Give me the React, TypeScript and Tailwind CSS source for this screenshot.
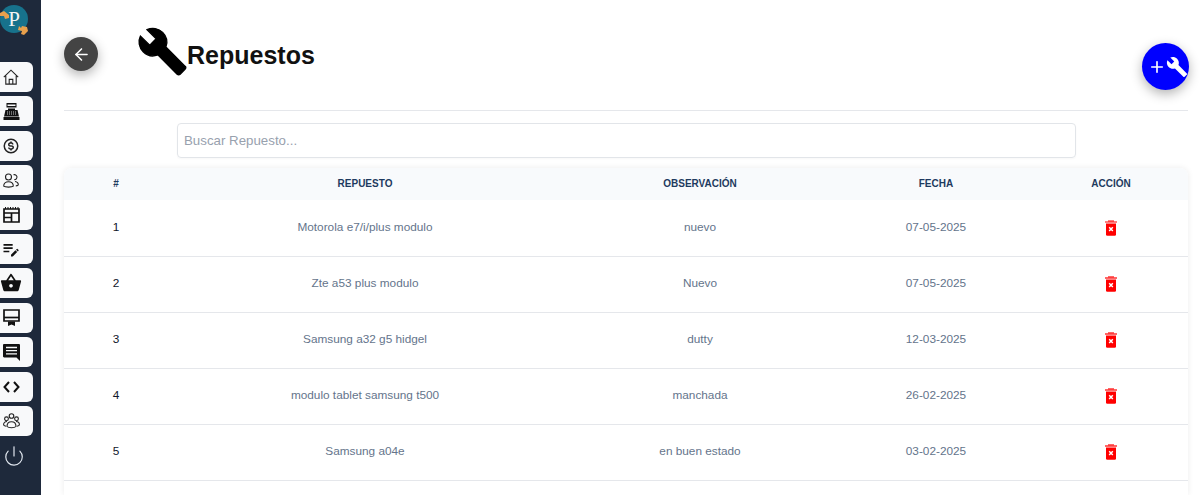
import { ArrowLeft, Plus, Power } from "lucide-react";
import { BiDollarCircle } from "react-icons/bi";
import { MdBuild, MdOutlineEditNote, MdShoppingBasket } from "react-icons/md";

const rows = [
  { id: 1, name: "Motorola e7/i/plus modulo", note: "nuevo", date: "07-05-2025" },
  { id: 2, name: "Zte a53 plus modulo", note: "Nuevo", date: "07-05-2025" },
  { id: 3, name: "Samsung a32 g5 hidgel", note: "dutty", date: "12-03-2025" },
  { id: 4, name: "modulo tablet samsung t500", note: "manchada", date: "26-02-2025" },
  { id: 5, name: "Samsung a04e", note: "en buen estado", date: "03-02-2025" },
];

function Wrench() {
  return (
    <svg width="51" height="51" viewBox="0 0 24 24" fill="#000" stroke="#000" strokeWidth="0.6" className="ml-[39px] mt-[26px] shrink-0">
      <path d="M22.7 19l-9.1-9.1c.9-2.3.4-5-1.500-6.900-2-2-5-2.400-7.400-1.300L9 6 6 9 1.600 4.700C.4 7.100.9 10.100 2.900 12.100c1.900 1.900 4.600 2.400 6.900 1.500l9.100 9.100c.4.4 1 .4 1.400 0l2.300-2.300c.5-.4.5-1.100.1-1.400z" />
    </svg>
  );
}

function House() {
  return (
    <svg width="16" height="16" viewBox="0 0 16 16" fill="none" stroke="#222" strokeWidth="1.1">
      <path d="M.8 8.200L8 1.200l7.200 7M2.800 6.800v8.300h10.400V6.800M6.200 15v-4.600h3.600V15" />
    </svg>
  );
}

function Register() {
  return (
    <svg width="17" height="17" viewBox="0 0 17 17" fill="#111">
      <path d="M3.500 0h10v4.500h-10zM5 5.500h7V7H5z" />
      <path d="M2.500 7h12l1.500 6.500H1z" />
      <path d="M.5 14h16v3H.5z" />
      <path d="M4 9h9M4 11h9" stroke="#f8f9fa" strokeWidth=".8" strokeDasharray="1 1" />
      <path d="M4.500 1.500h8v1.500h-8z" fill="#f8f9fa" />
    </svg>
  );
}

function Users() {
  return (
    <svg width="16" height="15" viewBox="0 0 16 15" fill="none" stroke="#222" strokeWidth="1.100">
      <circle cx="5.500" cy="4" r="3" />
      <path d="M.7 13.200c0-3 2-4.400 4.800-4.400s4.800 1.400 4.800 4.400c-1.300 1.200-8.300 1.200-9.600 0z" />
      <path d="M10.500 1.800a2.500 2.500 0 1 1 .8 4.800M12 8.500c2 .3 3.300 1.400 3.300 3.300 0 .5-1 1-2.500 1.100" />
    </svg>
  );
}

function CalendarGrid() {
  return (
    <svg width="17" height="16" viewBox="0 0 17 16" fill="none" stroke="#111" strokeWidth="1.700">
      <path d="M1 2h15v13H1z" />
      <path d="M1 6h15M1 10.500h7.500M8.500 6v9" />
      <path d="M2.500 0v2M5 0v2M7.500 0v2M10 0v2M12.500 0v2M15 0v2" strokeWidth="1" />
    </svg>
  );
}

function Kiosk() {
  return (
    <svg width="17" height="18" viewBox="0 0 17 18" fill="none" stroke="#111" strokeWidth="1.700">
      <path d="M1 1h15v11H1z" />
      <path d="M1 8.500h15" />
      <path d="M5 12.500h7v4.500l-3.500-1.500L5 17z" fill="#111" stroke="none" />
    </svg>
  );
}

function Chat() {
  return (
    <svg width="17" height="17" viewBox="0 0 17 17">
      <path d="M1.200 0h14.600c.7 0 1.200.5 1.200 1.200V17l-3.500-3.500H1.200c-.7 0-1.200-.5-1.200-1.200V1.200C0 .5.500 0 1.200 0z" fill="#111" />
      <path d="M3 3.500h11M3 6.700h11M3 9.900h11" stroke="#f8f9fa" strokeWidth="1.300" />
    </svg>
  );
}

function Code() {
  return (
    <svg width="17" height="12" viewBox="0 0 17 12" fill="none" stroke="#111" strokeWidth="2">
      <path d="M6 1L1.500 6 6 11M11 1l4.500 5L11 11" />
    </svg>
  );
}

function Team() {
  return (
    <svg width="17" height="16" viewBox="0 0 17 16" fill="none" stroke="#222" strokeWidth="1.100">
      <circle cx="8.500" cy="3" r="2.300" />
      <circle cx="3.500" cy="5.800" r="1.900" />
      <circle cx="13.500" cy="5.800" r="1.900" />
      <path d="M4 13.500c0-3 2-4.800 4.500-4.800S13 10.500 13 13.500c-1.500 1.700-7.500 1.700-9 0z" />
      <path d="M4 8.500c-2 0-3.400 1.200-3.400 3.200 0 .7 1 1.300 2.500 1.500M13 8.500c2 0 3.400 1.200 3.400 3.200 0 .7-1 1.300-2.500 1.500" />
    </svg>
  );
}

function TrashX() {
  return (
    <svg width="12" height="16" viewBox="0 0 12 16" className="mx-auto">
      <path d="M0 1.400h12v1.200H0z" fill="#f00" />
      <path d="M3 .4h6v1H3z" fill="#f00" />
      <path d="M1 3.400h10v11a1.300 1.300 0 0 1-1.300 1.300H2.300A1.300 1.300 0 0 1 1 14.400z" fill="#f00" />
      <path d="M4.200 7.200l3.600 3.800M7.800 7.200l-3.600 3.800" stroke="#fff" strokeWidth="1.500" />
    </svg>
  );
}

function Logo() {
  return (
    <svg width="30" height="36" viewBox="0 0 30 36" className="mt-1">
      <circle cx="14" cy="15" r="14" fill="#17728c" />
      <path d="M0 9l4-2 5 4 0 3-4 1-1-3-4 0zM19 22l2 2 1-2 5 1 1 4-4 4-3-1 1-3-4-1z" fill="#e8a04c" />
      <text x="14" y="22" textAnchor="middle" fontSize="21" fill="#f4f4f4" fontFamily="Liberation Serif, serif">
        P
      </text>
    </svg>
  );
}

const sideIcons = [
  <House />,
  <Register />,
  <BiDollarCircle size={18} color="#222" />,
  <Users />,
  <CalendarGrid />,
  <MdOutlineEditNote size={20} color="#111" />,
  <MdShoppingBasket size={22} color="#111" />,
  <Kiosk />,
  <Chat />,
  <Code />,
  <Team />,
];

function Sidebar() {
  return (
    <aside className="w-[41px] shrink-0 bg-[#1e293b] flex flex-col">
      <div className="h-[62px]">
        <Logo />
      </div>
      <div className="flex flex-col gap-[4.4px] pr-2">
        {sideIcons.map((icon, i) => (
          <div key={i} className="h-[30px] bg-[#f8f9fa] rounded-r-md flex items-center justify-center pr-[11px]">
            {icon}
          </div>
        ))}
      </div>
      <div className="flex justify-center pt-[9px] pr-[13px]">
        <Power size={22} color="#e2e8f0" strokeWidth={1.3} />
      </div>
    </aside>
  );
}

function App() {
  return (
    <div className="h-[495px] w-[1200px] overflow-hidden flex bg-white relative font-['Liberation_Sans',Arial,sans-serif]">
      <Sidebar />
      <main className="flex-1 pl-[23px] pr-3 flex flex-col">
        <header className="h-[111px] border-b border-[#e5e7eb] flex items-start shrink-0">
          <button className="mt-[37px] w-[34px] h-[34px] rounded-full bg-[#444] flex items-center justify-center shadow-[0_4px_12px_rgba(0,0,0,0.3)]">
            <ArrowLeft size={19} color="#fff" />
          </button>
          <Wrench />
          <h1 className="text-[25px] font-bold text-[#111] mt-10 -ml-px leading-[30px]">Repuestos</h1>
        </header>
        <div className="pl-[113px] pr-[112px] pt-3 pb-2.5 shrink-0">
          <input
            placeholder="Buscar Repuesto..."
            className="w-full h-[35px] border border-[#e2e5e9] rounded-sm px-1.5 text-[13.300px] placeholder:text-[#98a1ae] shadow-[0_1px_2px_rgba(0,0,0,0.03)]"
          />
        </div>
        <section className="flex-1 rounded-t-lg shadow-[0_0_6px_rgba(0,0,0,0.08)] overflow-hidden">
          <table className="w-full table-fixed border-collapse">
            <thead>
              <tr className="h-8 bg-[#f8fafc] text-[10px] font-bold uppercase text-[#1e3a5f]">
                <th className="w-[104px] pb-0.5">#</th>
                <th className="w-[394px] pb-0.5">Repuesto</th>
                <th className="w-[276px] pb-0.5">Observación</th>
                <th className="w-[196px] pb-0.5">Fecha</th>
                <th className="w-[154px] pb-0.5">Acción</th>
              </tr>
            </thead>
            <tbody className="text-[11.800px] text-[#64748b] text-center">
              {rows.map((r) => (
                <tr key={r.id} className="h-14 border-b border-[#e5e7eb]">
                  <td className="text-[#0f172a]">{r.id}</td>
                  <td>{r.name}</td>
                  <td>{r.note}</td>
                  <td>{r.date}</td>
                  <td>
                    <TrashX />
                  </td>
                </tr>
              ))}
            </tbody>
          </table>
        </section>
      </main>
      <button className="absolute left-[1142px] top-[43px] w-[47px] h-[47px] rounded-full bg-[#0000ff] flex items-center justify-center pl-1 text-white shadow-[0_4px_12px_rgba(0,0,0,0.3)]">
        <Plus size={18} strokeWidth={2.2} />
        <MdBuild size={22} />
      </button>
    </div>
  );
}

export default App;
